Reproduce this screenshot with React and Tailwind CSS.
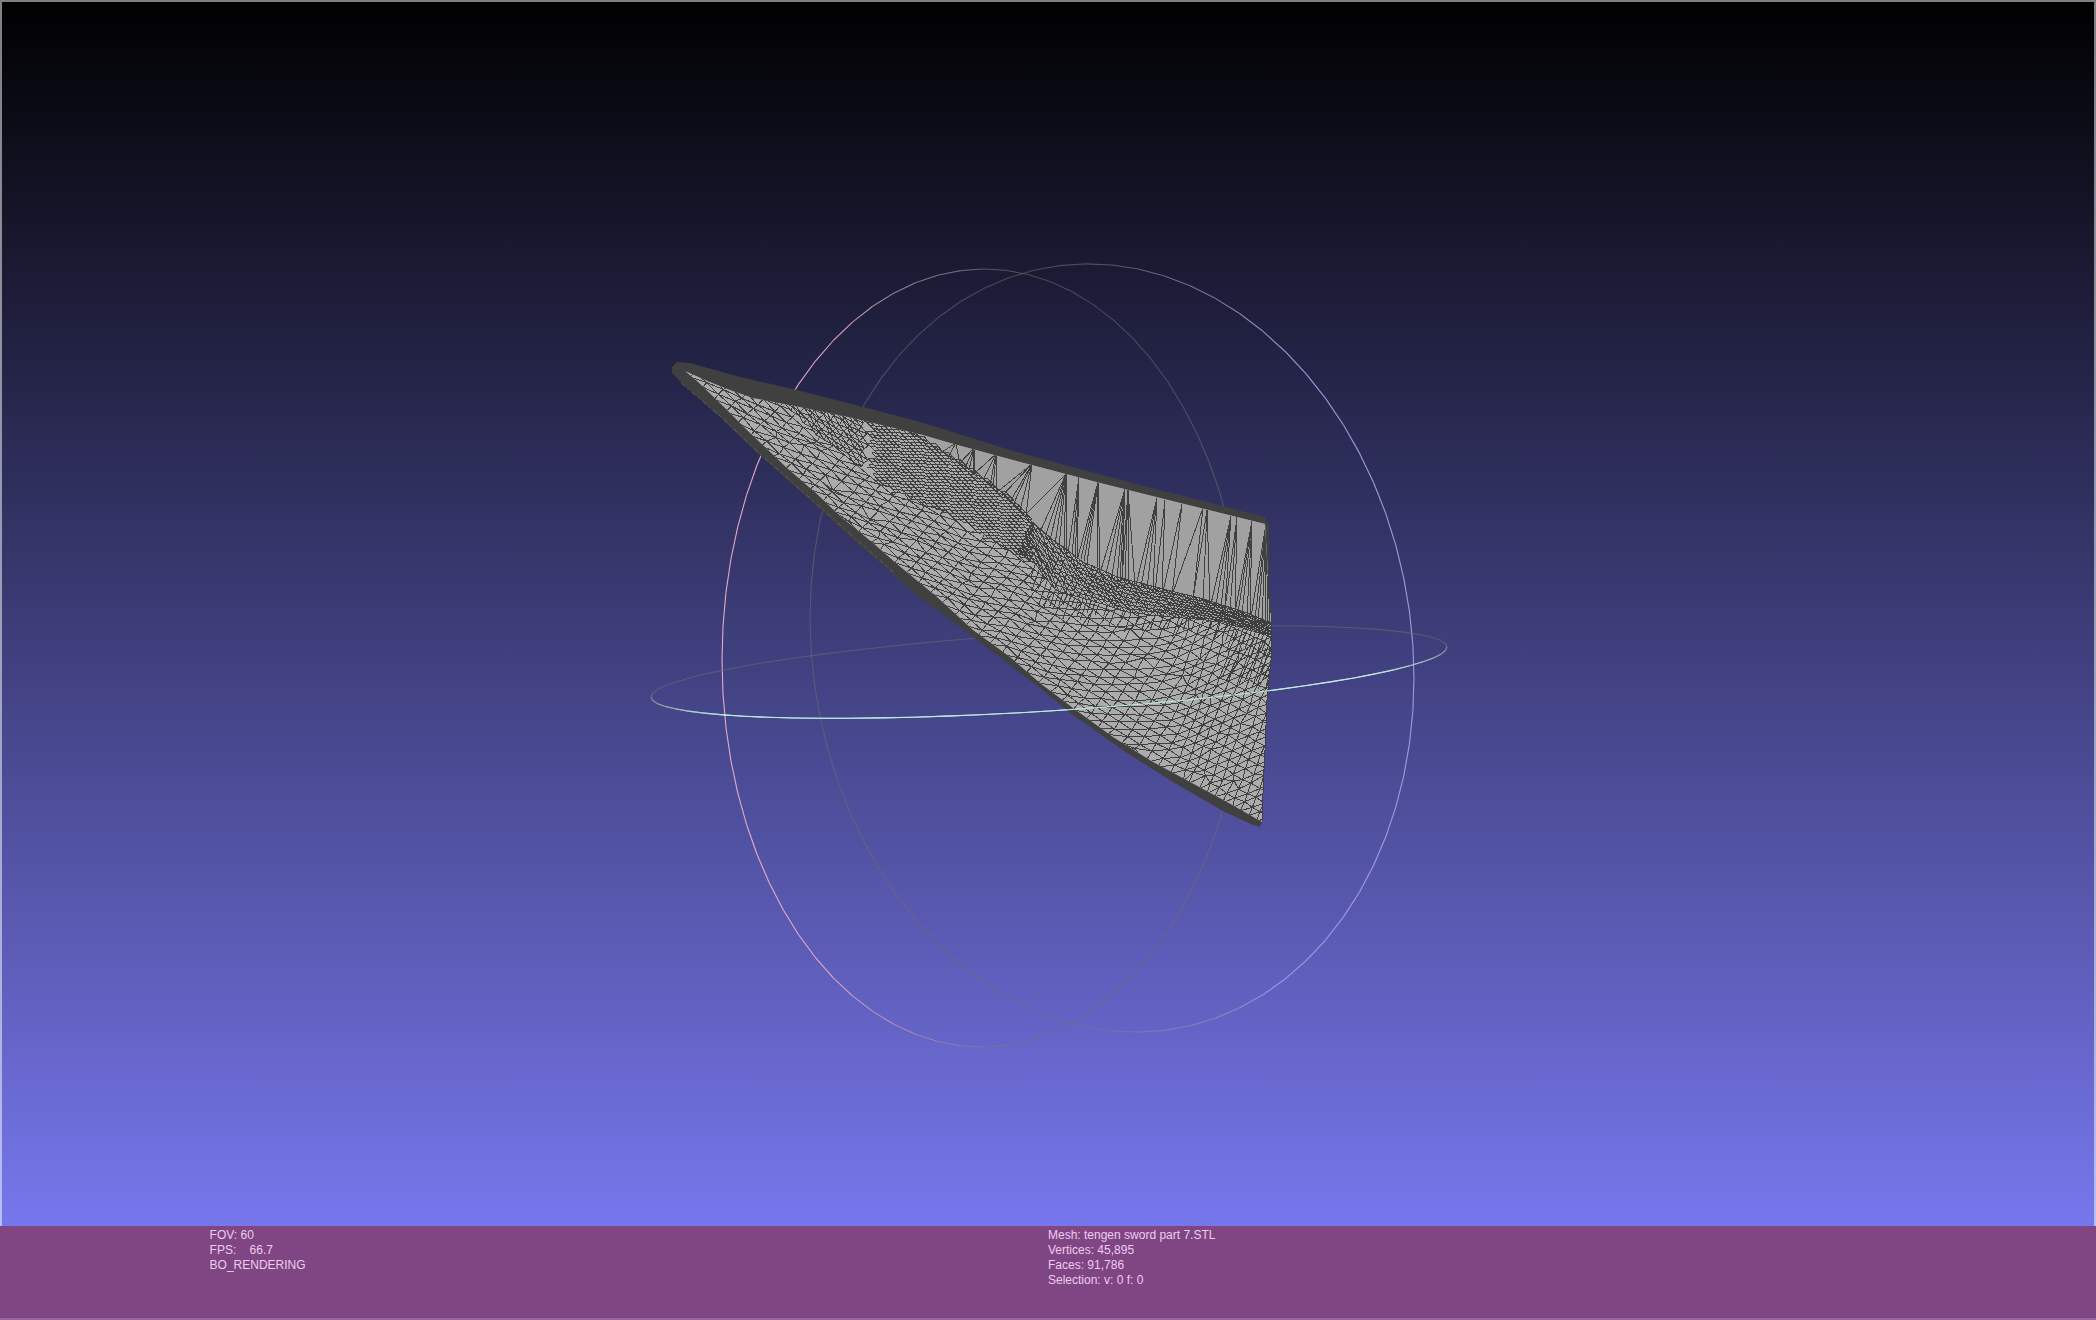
import { useMemo } from 'react';

const WIRE = '#3f403f';

// Rails of the blade, as [x, y] points sorted by x
const OUTLINE =
  'M672 373 L672 367 L677 362 L690 363 L740 377 L797 390 L863 407 L913 420 L940 428 L1010 450 L1080 469 L1140 485 L1223 506 L1265 517 L1268 523 L1268 577 L1271 613 L1271 660 L1267 700 L1265 750 L1263 793 L1262 822 L1260 827 L1253 825 L1223 811 L1173 782 L1127 753 L1073 715 L1040 688 L980 642 L940 612 L917 596 L893 574 L853 540 L820 509 L780 473 L757 453 L720 417 L687 388 Z';

const TOP_EDGE = [
  [685, 371], [710, 382], [730, 390], [753, 398], [800, 407], [853, 418], [923, 435],
  [950, 443], [1020, 462], [1100, 483], [1180, 503], [1265, 524],
];

const LOW_EDGE = [
  [685, 371], [698, 382], [723, 406], [750, 433], [767, 449], [787, 468], [817, 494], [840, 516], [873, 543],
  [897, 564], [937, 597], [973, 630], [1010, 657], [1040, 683], [1073, 708], [1113, 737],
  [1153, 762], [1190, 782], [1227, 802], [1262, 822],
];

const RIDGE = [
  [785, 404], [853, 418], [910, 432], [940, 450], [973, 472], [1003, 493], [1030, 520], [1053, 540],
  [1083, 562], [1120, 578], [1167, 590], [1207, 600], [1247, 613], [1271, 623],
];

const DENSE_EDGE = [
  [785, 404], [805, 424], [835, 446], [867, 467], [890, 487], [927, 503], [947, 510], [973, 530],
  [1007, 545], [1037, 565], [1055, 590], [1100, 603], [1127, 612], [1173, 617], [1223, 622], [1271, 637],
];

// Fans of long thin triangles on the flat wall: apex, then base points
const FANS = [
  [[956, 443], [[942, 450], [948, 455], [960, 463]]],
  [[974, 448], [[960, 461], [965, 466], [969, 468], [973, 470], [974, 471]]],
  [[996, 454], [[975, 471], [983, 478], [990, 483], [993, 487], [996, 490]]],
  [[1032, 464], [[997, 490], [1001, 495], [1010, 500], [1013, 503], [1020, 508], [1026, 514]]],
  [[1066, 474], [[1026, 512], [1040, 530], [1045, 535], [1050, 538], [1055, 542], [1059, 545], [1064, 549], [1067, 553], [1066, 551]]],
  [[1079, 477], [[1068, 551], [1072, 553], [1075, 555], [1077, 557]]],
  [[1098, 482], [[1078, 555], [1081, 557], [1084, 559], [1087, 561], [1097, 566], [1100, 568]]],
  [[1125, 489], [[1101, 568], [1106, 572], [1112, 574], [1117, 577], [1120, 578], [1122, 579]]],
  [[1128, 490], [[1122, 578], [1125, 580], [1129, 582], [1135, 583]]],
  [[1157, 498], [[1136, 583], [1141, 585], [1147, 587], [1153, 590]]],
  [[1165, 500], [[1155, 590], [1162, 590]]],
  [[1182, 504], [[1163, 590], [1172, 593]]],
  [[1203, 508], [[1172, 593], [1193, 597]]],
  [[1207, 510], [[1193, 597], [1203, 600], [1210, 602]]],
  [[1231, 516], [[1211, 602], [1216, 603], [1221, 605], [1225, 607]]],
  [[1237, 517], [[1225, 607], [1230, 608], [1235, 610]]],
  [[1252, 521], [[1235, 610], [1238, 611], [1242, 612], [1247, 613], [1250, 614]]],
  [[1266, 524], [[1251, 615], [1255, 617], [1258, 618], [1262, 619], [1265, 621], [1268, 623], [1270, 600], [1270, 622]]],
];

const toPoints = (pts) => pts.map((p) => p.join(',')).join(' ');

function at(rail, x) {
  for (let i = 1; i < rail.length; i++) {
    if (x <= rail[i][0] || i === rail.length - 1) {
      const [ax, ay] = rail[i - 1];
      const [bx, by] = rail[i];
      return ay + ((by - ay) * (x - ax)) / (bx - ax);
    }
  }
}

function makeRandom(seed) {
  let s = seed;
  return () => {
    s = (s * 1664525 + 1013904223) % 4294967296;
    return s / 4294967296;
  };
}

// Joins the vertices of a lattice into quads, or triangles with diagonals on
function lattice(cols, rows, vertex, diagonals = true) {
  const grid = [];
  for (let j = 0; j < rows; j++) {
    const row = [];
    for (let i = 0; i < cols; i++) row.push(vertex(i, j));
    grid.push(row);
  }
  let d = '';
  const edge = (a, b) => {
    if (a && b) d += `M${a[0].toFixed(1)} ${a[1].toFixed(1)}L${b[0].toFixed(1)} ${b[1].toFixed(1)}`;
  };
  for (let j = 0; j < rows; j++) {
    for (let i = 0; i < cols; i++) {
      edge(grid[j][i], grid[j][i + 1]);
      if (j + 1 < rows) {
        edge(grid[j][i], grid[j + 1][i]);
        if (diagonals) edge(grid[j][i], grid[j + 1][i + 1]);
      }
    }
  }
  return d;
}

function buildFace() {
  const random = makeRandom(7);
  // rows run parallel to the lower edge, columns lean to the right
  return lattice(110, 30, (i, j) => {
    const u = 500 + i * 12 + j * 5;
    const x = u < 1180 ? u : 1180 + (u - 1180) * 0.7;
    if (x < 680 || x > 1290) return null;
    const k = Math.max(0, (x - 960) / 310);
    const y = at(LOW_EDGE, x) - (j - 2) * (9.5 + k * 2) + 2;
    const limit = x < 800 ? at(TOP_EDGE, x) - 8 : at(DENSE_EDGE, x) - 3;
    if (y < limit) return null;
    const wild = random() > 0.9 ? 8 : 2;
    return [x + (random() - 0.5) * wild, y + (random() - 0.5) * wild];
  });
}

// Tighter triangles where the sparse face runs into the dense patch
function buildShoulder() {
  const random = makeRandom(11);
  return lattice(50, 50, (i, j) => {
    const x = 740 + i * 8 - (j - 20) * 3;
    const y = 372 + i * 4.6 + (j - 20) * 3.2;
    if (x < 776 || x > 868) return null;
    if (y < at(TOP_EDGE, x) - 5 || y > at(DENSE_EDGE, x) + 4) return null;
    return [x + (random() - 0.5) * 2, y + (random() - 0.5) * 2];
  });
}

function buildDense() {
  const random = makeRandom(21);
  return lattice(
    90,
    60,
    (i, j) => {
      const x = 700 + i * 5 + j * 3;
      const y = 408 + j * 3 + (x - 800) * 0.04;
      if (x > 1034 || x < 860 + random() * 12) return null;
      if (y < at(RIDGE, x) - 4 || y > at(DENSE_EDGE, x) + random() * 8) return null;
      return [x + (random() - 0.5), y];
    },
    false
  );
}

function buildBand() {
  const random = makeRandom(33);
  return lattice(50, 10, (i, j) => {
    const x = 1032 + i * 6 - j * 1.5;
    const top = at(RIDGE, x);
    const y = top + ((at(DENSE_EDGE, x) - top) * j) / 9;
    return [x + (random() - 0.5) * 2, y + (random() - 0.5)];
  });
}

// Short strokes that thin out below the band
function buildFringe() {
  const random = makeRandom(5);
  let d = '';
  for (let x = 1036; x < 1274; x += x < 1100 || x > 1220 ? 4 : 8) {
    const y = at(DENSE_EDGE, x) - 2;
    const len = (x < 1100 || x > 1220 ? 12 : 6) + random() * 16;
    d += `M${x} ${y.toFixed(1)}l${(-len * 0.35).toFixed(1)} ${len.toFixed(1)}`;
  }
  for (let x = 1236; x < 1290; x += 6) {
    d += `M${x} 648l-${Math.round(14 + random() * 10)} ${Math.round(28 + random() * 18)}`;
  }
  return d;
}

function buildFans() {
  return FANS.map(([[ax, ay], bases]) => bases.map(([x, y]) => `M${ax} ${ay}L${x} ${y + 2}`).join('')).join('');
}

// front: angle at which the ring comes closest to the viewer
const RINGS = [
  { id: 'x', cx: 983, cy: 658, ax: 261, ay: -2, by: 389, color: [236, 176, 200], front: Math.PI },
  { id: 'z', cx: 1112, cy: 648, ax: 302, ay: 30, by: 383, color: [164, 160, 226], front: 0 },
  { id: 'y', cx: 1049, cy: 672, ax: 398, ay: -25, by: 39, color: [190, 236, 222], front: Math.PI / 2 },
];

function ringSegments(ring) {
  const count = 72;
  const point = (t) => [
    ring.cx + ring.ax * Math.cos(t),
    ring.cy + ring.ay * Math.cos(t) + ring.by * Math.sin(t),
  ];
  return Array.from({ length: count }, (_, i) => {
    const t = (i * 2 * Math.PI) / count;
    const facing = Math.cos(t + Math.PI / count - ring.front);
    const mix = Math.min(1, Math.max(0, facing * 1.3 + 0.2));
    const rgb = ring.color.map((c) => Math.round(112 + (c - 112) * mix));
    return {
      a: point(t),
      b: point(t + (2 * Math.PI) / count),
      color: `rgb(${rgb.join(',')})`,
      opacity: 0.55 + 0.4 * mix,
      front: facing > 0,
    };
  });
}

function Ring({ ring, frontOnly }) {
  return (
    <g strokeWidth="1.1">
      {ringSegments(ring)
        .filter((s) => !frontOnly || s.front)
        .map((s, i) => (
          <line key={i} x1={s.a[0]} y1={s.a[1]} x2={s.b[0]} y2={s.b[1]} stroke={s.color} strokeOpacity={s.opacity} />
        ))}
    </g>
  );
}

function Mesh() {
  const paths = useMemo(
    () => ({
      face: buildFace(),
      shoulder: buildShoulder(),
      dense: buildDense(),
      band: buildBand(),
      fringe: buildFringe(),
      fans: buildFans(),
    }),
    []
  );
  const rightEdge = [[1271, 660], [1267, 700], [1265, 750], [1263, 793]];
  const lowEdgeBack = [...LOW_EDGE].reverse();
  const inner = [...TOP_EDGE, [1268, 577], [1271, 613], ...rightEdge, ...lowEdgeBack];
  const wall = [[910, 432], ...TOP_EDGE.slice(7), [1271, 623], ...RIDGE.slice(3, -1).reverse()];
  const face = [...TOP_EDGE.slice(0, 4), ...DENSE_EDGE, ...rightEdge, ...lowEdgeBack];

  return (
    <g>
      <defs>
        <clipPath id="inner">
          <polygon points={toPoints(inner)} />
        </clipPath>
        <clipPath id="face">
          <polygon points={toPoints(face)} />
        </clipPath>
      </defs>
      <path d={OUTLINE} fill={WIRE} />
      <polygon points={toPoints(inner)} fill="#acacac" />
      <polygon points={toPoints(wall)} fill="#a1a1a1" />
      <g fill="none" stroke={WIRE} strokeWidth="1" shapeRendering="crispEdges">
        <g clipPath="url(#face)">
          <path d={paths.face} />
          <path d={paths.fringe} />
        </g>
        <g clipPath="url(#inner)">
          <path d={paths.shoulder} />
          <path d={paths.dense} />
          <path d={paths.band} />
          <path d={paths.fans} />
        </g>
        <polyline points={toPoints(RIDGE.slice(2))} />
        <polyline points="1268,523 1268,577 1271,613 1271,660 1267,700 1265,750 1263,793 1262,822" />
      </g>
      <polyline
        points="681,383 720,416 757,451 820,507 893,572"
        fill="none"
        stroke="#6b6c72"
        strokeOpacity="0.7"
        strokeDasharray="5 3 2 4"
      />
    </g>
  );
}

function Viewport() {
  return (
    <main className="flex-1 border-x-2 border-t-2 border-white/50">
      <svg viewBox="2 2 2092 1224" className="block w-full" role="img" aria-label="Mesh view">
        {RINGS.map((ring) => (
          <Ring key={ring.id} ring={ring} />
        ))}
        <Mesh />
        <Ring ring={RINGS[2]} frontOnly />
      </svg>
    </main>
  );
}

function StatusBar() {
  return (
    <footer className="flex h-[94px] bg-[#7f4683] pt-[2px] text-[12px] leading-[15px] text-[#f0ccf0] shadow-[inset_0_-2px_#96659a]">
      <div className="w-1/2 whitespace-pre pl-[10%]">
        <p>FOV: 60</p>
        <p>{'FPS:    66.7'}</p>
        <p>BO_RENDERING</p>
      </div>
      <div className="w-1/2">
        <p>Mesh: tengen sword part 7.STL</p>
        <p>Vertices: 45,895</p>
        <p>Faces: 91,786</p>
        <p>Selection: v: 0 f: 0</p>
      </div>
    </footer>
  );
}

export default function App() {
  return (
    <div className="flex min-h-screen flex-col bg-linear-to-b/srgb from-black to-[#8080ff] font-['Liberation_Sans',Arial,sans-serif]">
      <Viewport />
      <StatusBar />
    </div>
  );
}
